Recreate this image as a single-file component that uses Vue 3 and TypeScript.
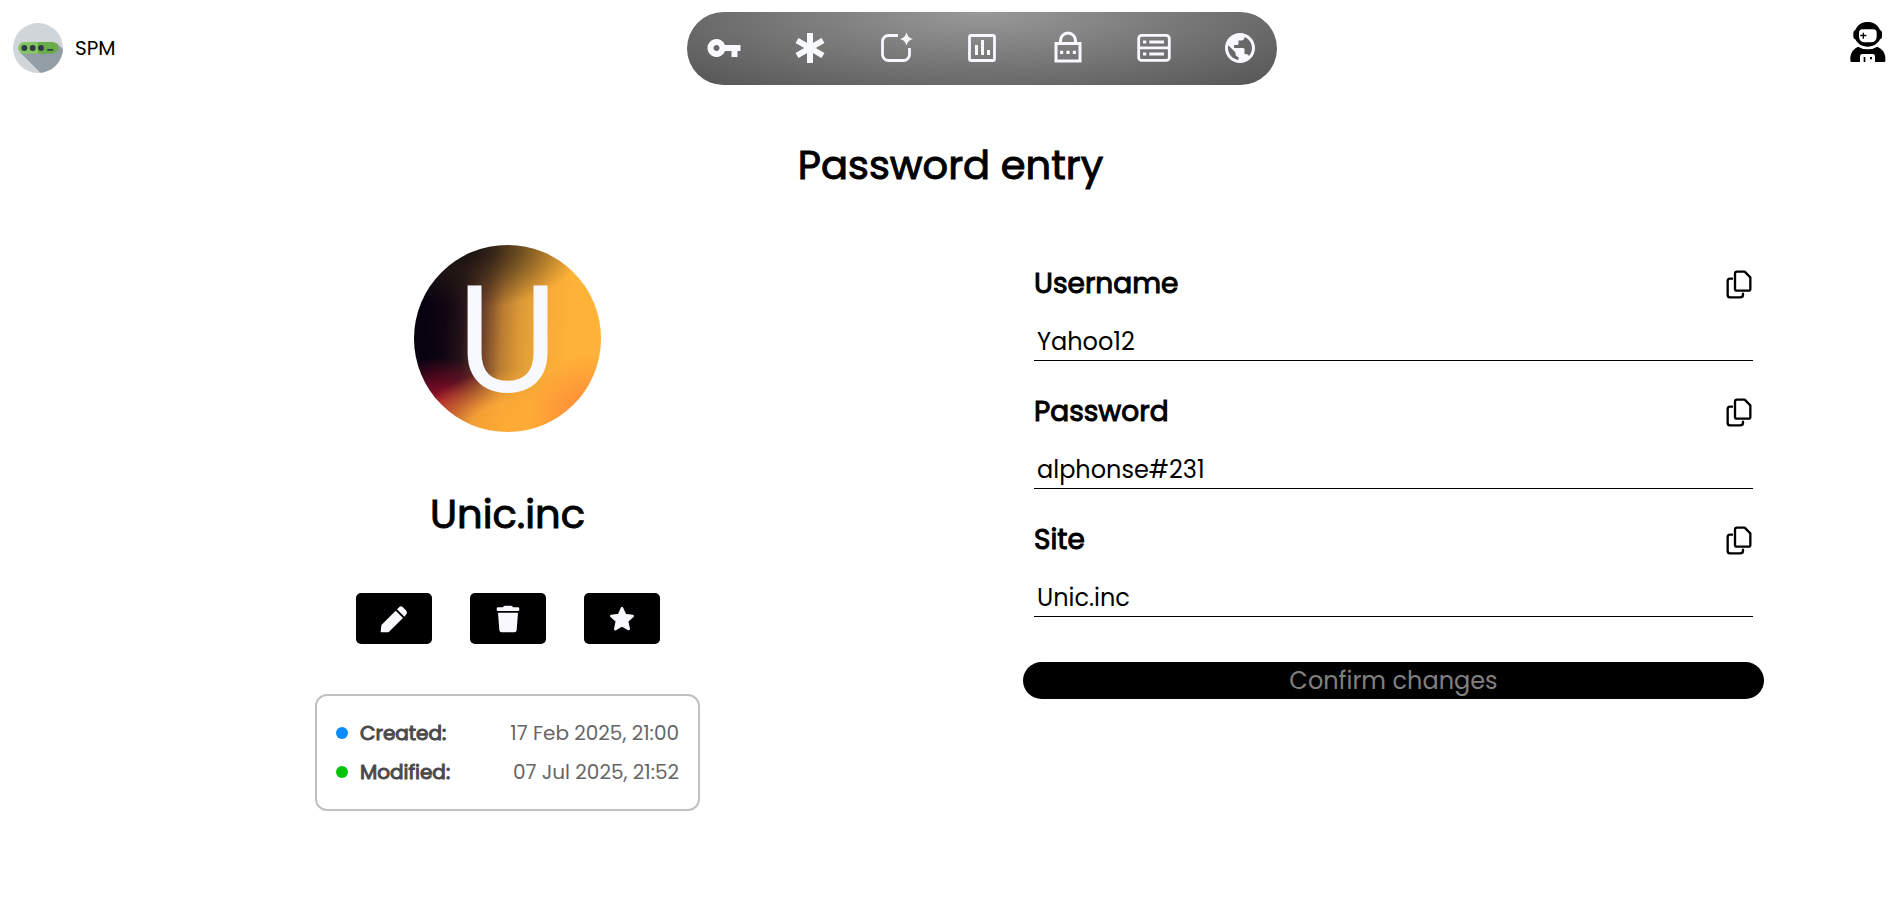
<script setup lang="ts">
import { reactive } from 'vue'

interface Field {
  id: 'username' | 'password' | 'site'
  label: string
}

const fields: Field[] = [
  { id: 'username', label: 'Username' },
  { id: 'password', label: 'Password' },
  { id: 'site', label: 'Site' },
]

const entry = reactive({
  username: 'Yahoo12',
  password: 'alphonse#231',
  site: 'Unic.inc',
})

const dates = [
  { key: 'created', label: 'Created:', value: '17 Feb 2025, 21:00' },
  { key: 'modified', label: 'Modified:', value: '07 Jul 2025, 21:52' },
]
</script>

<template>
  <div class="page">
    <header class="topbar">
      <a href="#" class="brand">
        <svg class="brand-logo" viewBox="0 0 150 150" aria-hidden="true">
          <defs>
            <clipPath id="logo-clip"><circle cx="75" cy="75" r="75" /></clipPath>
          </defs>
          <g clip-path="url(#logo-clip)">
            <rect width="150" height="150" fill="#cfd5d9" />
            <path d="M20 87L84 151H151V80L131 60Z" fill="#939da6" />
          </g>
          <path d="M33 57H76V92H33a17.5 17.5 0 0 1 0-35z" fill="#84c463" />
          <path d="M75 57H118a17.5 17.5 0 0 1 0 35H75z" fill="#69ad48" />
          <g fill="#313c46">
            <circle cx="34" cy="75" r="9" />
            <circle cx="59" cy="75" r="9" />
            <circle cx="84" cy="75" r="9" />
            <rect x="102" y="78" width="19" height="5" rx="2" />
          </g>
        </svg>
        <span>SPM</span>
      </a>

      <nav class="menu" aria-label="Main">
        <a href="#" aria-label="Passwords">
          <svg viewBox="0 0 24 24"><path fill="currentColor" d="M12.65 10C11.83 7.67 9.61 6 7 6c-3.31 0-6 2.69-6 6s2.69 6 6 6c2.61 0 4.83-1.67 5.65-4H17v4h4v-4h2v-4H12.65zM7 14c-1.1 0-2-.9-2-2s.9-2 2-2 2 .9 2 2-.9 2-2 2z" /></svg>
        </a>
        <a href="#" aria-label="Generator">
          <svg viewBox="0 0 24 24"><path fill="none" stroke="currentColor" stroke-width="4" d="M12 2v20M3.34 7l17.32 10M3.34 17L20.66 7" /></svg>
        </a>
        <a href="#" aria-label="New entry">
          <svg viewBox="0 0 36 36">
            <path fill="none" stroke="currentColor" stroke-width="2.8" d="M20 5.500H10.500a6 6 0 0 0-6 6V24.500a6 6 0 0 0 6 6H25.500a6 6 0 0 0 6-6V18" />
            <path fill="currentColor" d="M28.500 2.500C29.900 6.500 31 7.600 35 9C31 10.400 29.900 11.500 28.500 15.500C27.100 11.500 26 10.400 22 9C26 7.600 27.100 6.500 28.500 2.500Z" />
          </svg>
        </a>
        <a href="#" aria-label="Statistics">
          <svg viewBox="0 0 36 36">
            <rect x="5.500" y="5.500" width="25" height="25" rx="1.500" fill="none" stroke="currentColor" stroke-width="2.800" />
            <path fill="currentColor" d="M11 15h3v10h-3zM17 10h3v15h-3zM23 20h3v5h-3z" />
          </svg>
        </a>
        <a href="#" aria-label="Vault">
          <svg viewBox="0 0 36 36">
            <path fill="none" stroke="currentColor" stroke-width="3" d="M6 13.500H30V31H6ZM10.500 13V10.500a7.500 7.500 0 0 1 15 0V13" />
            <path fill="currentColor" d="M10 20.700h3.200v3.200H10zM16.400 20.700h3.200v3.200h-3.200zM22.800 20.700H26v3.200h-3.200z" />
          </svg>
        </a>
        <a href="#" aria-label="Storage">
          <svg viewBox="0 0 36 36">
            <rect x="2.700" y="5.400" width="30.600" height="25" rx="3" fill="none" stroke="currentColor" stroke-width="2.800" />
            <path fill="currentColor" d="M3 16.500h30v2.800H3zM7 10.600h3.300v3H7zM13.300 10.600H28v3H13.300zM7 22.400h3.300v3H7zM13.300 22.400H28v3H13.300z" />
          </svg>
        </a>
        <a href="#" aria-label="Web">
          <svg viewBox="0 0 24 24"><path fill="currentColor" d="M12 2C6.480 2 2 6.480 2 12s4.480 10 10 10 10-4.480 10-10S17.520 2 12 2zm-1 17.930c-3.950-.490-7-3.850-7-7.930 0-.620.080-1.210.210-1.790L9 15v1c0 1.100.900 2 2 2v1.930zm6.900-2.540c-.260-.810-1-1.390-1.900-1.390h-1v-3c0-.550-.450-1-1-1H8v-2h2c.550 0 1-.450 1-1V7h2c1.100 0 2-.900 2-2v-.410c2.930 1.190 5 4.060 5 7.410 0 2.080-.800 3.970-2.100 5.390z" /></svg>
        </a>
      </nav>

      <button type="button" class="profile" aria-label="Profile">
        <svg viewBox="-2 -2 114 126">
          <path d="M17 28C24 12 37 4 54 4S84 12 91 28Q97 30 97 36V48Q97 54 91 56C84 70 71 78 54 78S24 70 17 56Q11 54 11 48V36Q11 30 17 28Z" />
          <path fill="#fff" d="M38 26H71Q81 26 81 37V47Q81 65 63 65H46Q28 65 28 47V37Q28 26 38 26Z" />
          <path d="M39 36h4v6h7v5h-7v7h-4v-7h-7v-5h7z" />
          <path d="M25 78Q38 86 54 86T83 78Q103 86 107 109V120Q107 124 103 124H6Q2 124 2 120V109Q6 86 25 78Z" />
          <path fill="#fff" d="M38 100H69Q76 100 76 107V124H31V107Q31 100 38 100Z" />
          <path d="M42 109h5v15h-5zM61 109h6v7h-6z" />
        </svg>
      </button>
    </header>

    <main class="content">
      <h1 class="title">Password entry</h1>

      <section class="summary">
        <div class="avatar"><span>U</span></div>
        <h2 class="name">Unic.inc</h2>

        <div class="actions">
          <button type="button" aria-label="Edit">
            <svg viewBox="0 0 84 84"><path d="M47 17L69 39L27 80Q26 82 23 82H3Q2 82 2 80L4 62Q4 60 5 59ZM51 13L58 6Q63 2 68 6L79 17Q83 22 79 28L73 35Z" /></svg>
          </button>
          <button type="button" aria-label="Delete">
            <svg viewBox="0 0 84 84"><path d="M29 4Q30 2 33 2H51Q54 2 55 4L57 7H72Q76 7 76 11V14Q76 18 72 18H12Q8 18 8 14V11Q8 7 12 7H27ZM12 23H72L68 76Q67 82 61 82H23Q17 82 16 76Z" /></svg>
          </button>
          <button type="button" aria-label="Favourite">
            <svg viewBox="0 0 84 84"><path stroke-width="8" stroke-linejoin="round" d="M42 10L51 30L74 33L57 48L62 72L42 60L22 72L27 48L10 33L33 30Z" /></svg>
          </button>
        </div>

        <dl class="dates">
          <div v-for="d in dates" :key="d.key" class="date-row">
            <dt><i class="dot" :class="d.key"></i>{{ d.label }}</dt>
            <dd>{{ d.value }}</dd>
          </div>
        </dl>
      </section>

      <form class="form" @submit.prevent>
        <div v-for="f in fields" :key="f.id" class="field">
          <div class="field-head">
            <label :for="f.id">{{ f.label }}</label>
            <button type="button" class="copy" :aria-label="'Copy ' + f.label">
              <svg viewBox="0 0 81 87">
                <path d="M33 5H56L73 22V57Q73 62 68 62H33Q27 62 27 57V11Q27 5 33 5Z" />
                <path d="M18 26H12Q5 26 5 33V75Q5 82 12 82H42Q51 82 51 75V71" />
              </svg>
            </button>
          </div>
          <input :id="f.id" v-model="entry[f.id]" type="text" autocomplete="off" spellcheck="false" />
        </div>
        <button type="submit" class="confirm" disabled>Confirm changes</button>
      </form>
    </main>
  </div>
</template>

<style>
body {
  margin: 0;
  background: #fff;
}
</style>

<style scoped>
.page {
  font-family: Poppins, Inter, "Open Sans", sans-serif;
  color: #000;
}

.page * {
  box-sizing: border-box;
}

svg {
  display: block;
}

button {
  border: 0;
  padding: 0;
  font-family: inherit;
  cursor: pointer;
}

.topbar {
  display: flex;
  align-items: flex-start;
  justify-content: space-between;
  padding: 12px 10px 0 13px;
}

.brand {
  display: flex;
  align-items: center;
  gap: 12px;
  height: 72px;
  color: #000;
  font-size: 20px;
  text-decoration: none;
}

.brand-logo {
  width: 50px;
  height: 50px;
}

.menu {
  display: flex;
  align-items: center;
  gap: 50px;
  height: 73px;
  padding: 0 19px 1px;
  border-radius: 37px;
  background: radial-gradient(ellipse at top, #999, #555);
}

.menu a {
  color: ghostwhite;
}

.menu svg {
  width: 36px;
  height: 36px;
}

.profile {
  margin-top: 8px;
  background: none;
}

.profile svg {
  width: 38px;
  height: 42px;
}

.content {
  display: grid;
  grid-template-columns: 1fr 1fr;
  column-gap: 145px;
  padding: 0 133px 32px 137px;
}

.title,
.name {
  font-size: 40px;
  font-weight: 400;
  line-height: 60px;
  -webkit-text-stroke: 1px currentColor;
}

.title {
  grid-column: 1 / -1;
  margin: 50px 0 0;
  text-align: center;
}

.summary {
  display: flex;
  flex-direction: column;
  align-items: center;
  padding-top: 50px;
}

.avatar {
  display: flex;
  align-items: center;
  justify-content: center;
  width: 187px;
  height: 187px;
  border-radius: 50%;
  background:
    radial-gradient(circle at 96% 92%, #ff8438 0, rgba(255, 132, 56, 0) 26%),
    radial-gradient(ellipse 62% 34% at 60% 100%, #ffab36 0, rgba(255, 171, 54, 0.9) 50%, rgba(255, 171, 54, 0) 100%),
    radial-gradient(ellipse 34% 26% at 14% 86%, rgba(185, 16, 46, 0.9) 0, rgba(160, 14, 44, 0.7) 35%, rgba(90, 6, 36, 0) 100%),
    radial-gradient(ellipse 60% 34% at 30% 0, rgba(20, 16, 14, 0.9) 0, rgba(40, 30, 18, 0.6) 45%, rgba(120, 85, 35, 0) 100%),
    linear-gradient(93deg, #060210 8%, #100612 18%, #26131a 27%, #7a4a2c 39%, #b97c32 47%, #dc9a36 56%, #f8ac37 70%, #ffb238 82%);
  color: ghostwhite;
  font-size: 152px;
  line-height: 187px;
}

.name {
  margin: 52px 0 0;
}

.actions {
  display: flex;
  gap: 38px;
  margin-top: 49px;
}

.actions button {
  display: flex;
  align-items: center;
  justify-content: center;
  width: 76px;
  height: 51px;
  border-radius: 5px;
  background: #000;
}

.actions svg {
  width: 28px;
  height: 28px;
  fill: ghostwhite;
  stroke: ghostwhite;
  stroke-width: 0;
}

.dates {
  display: flex;
  flex-direction: column;
  gap: 9px;
  width: 385px;
  margin: 50px 0 0;
  padding: 22px 19px;
  border: 2px solid #c0c0c0;
  border-radius: 12px;
  font-size: 20px;
  line-height: 30px;
}

.date-row {
  display: flex;
  justify-content: space-between;
}

.date-row dt {
  display: flex;
  align-items: center;
  color: #4a4a4a;
  -webkit-text-stroke: 1px currentColor;
}

.date-row dd {
  margin: 0;
  color: #666;
}

.dot {
  width: 12px;
  height: 12px;
  margin-right: 12px;
  border-radius: 50%;
}

.created {
  background: #0a8cff;
}

.modified {
  background: #00c40a;
}

.form {
  padding-top: 64px;
}

.field {
  margin: 0 11px 26px;
}

.field-head {
  display: flex;
  align-items: center;
  justify-content: space-between;
  height: 50px;
}

.field-head label {
  font-size: 28px;
  -webkit-text-stroke: 1px currentColor;
}

.copy {
  background: none;
}

.copy svg {
  width: 27px;
  height: 29px;
  fill: none;
  stroke: #000;
  stroke-width: 7;
  stroke-linejoin: round;
  stroke-linecap: round;
}

.field input {
  display: block;
  width: 100%;
  height: 38px;
  margin-top: 14px;
  padding: 0 3px;
  border: 0;
  border-bottom: 1px solid #000;
  outline: 0;
  background: none;
  color: #000;
  font-family: inherit;
  font-size: 24px;
}

.confirm {
  display: block;
  width: 100%;
  height: 37px;
  margin-top: 45px;
  border-radius: 19px;
  background: #000;
  color: #808080;
  font-size: 24px;
}
</style>
